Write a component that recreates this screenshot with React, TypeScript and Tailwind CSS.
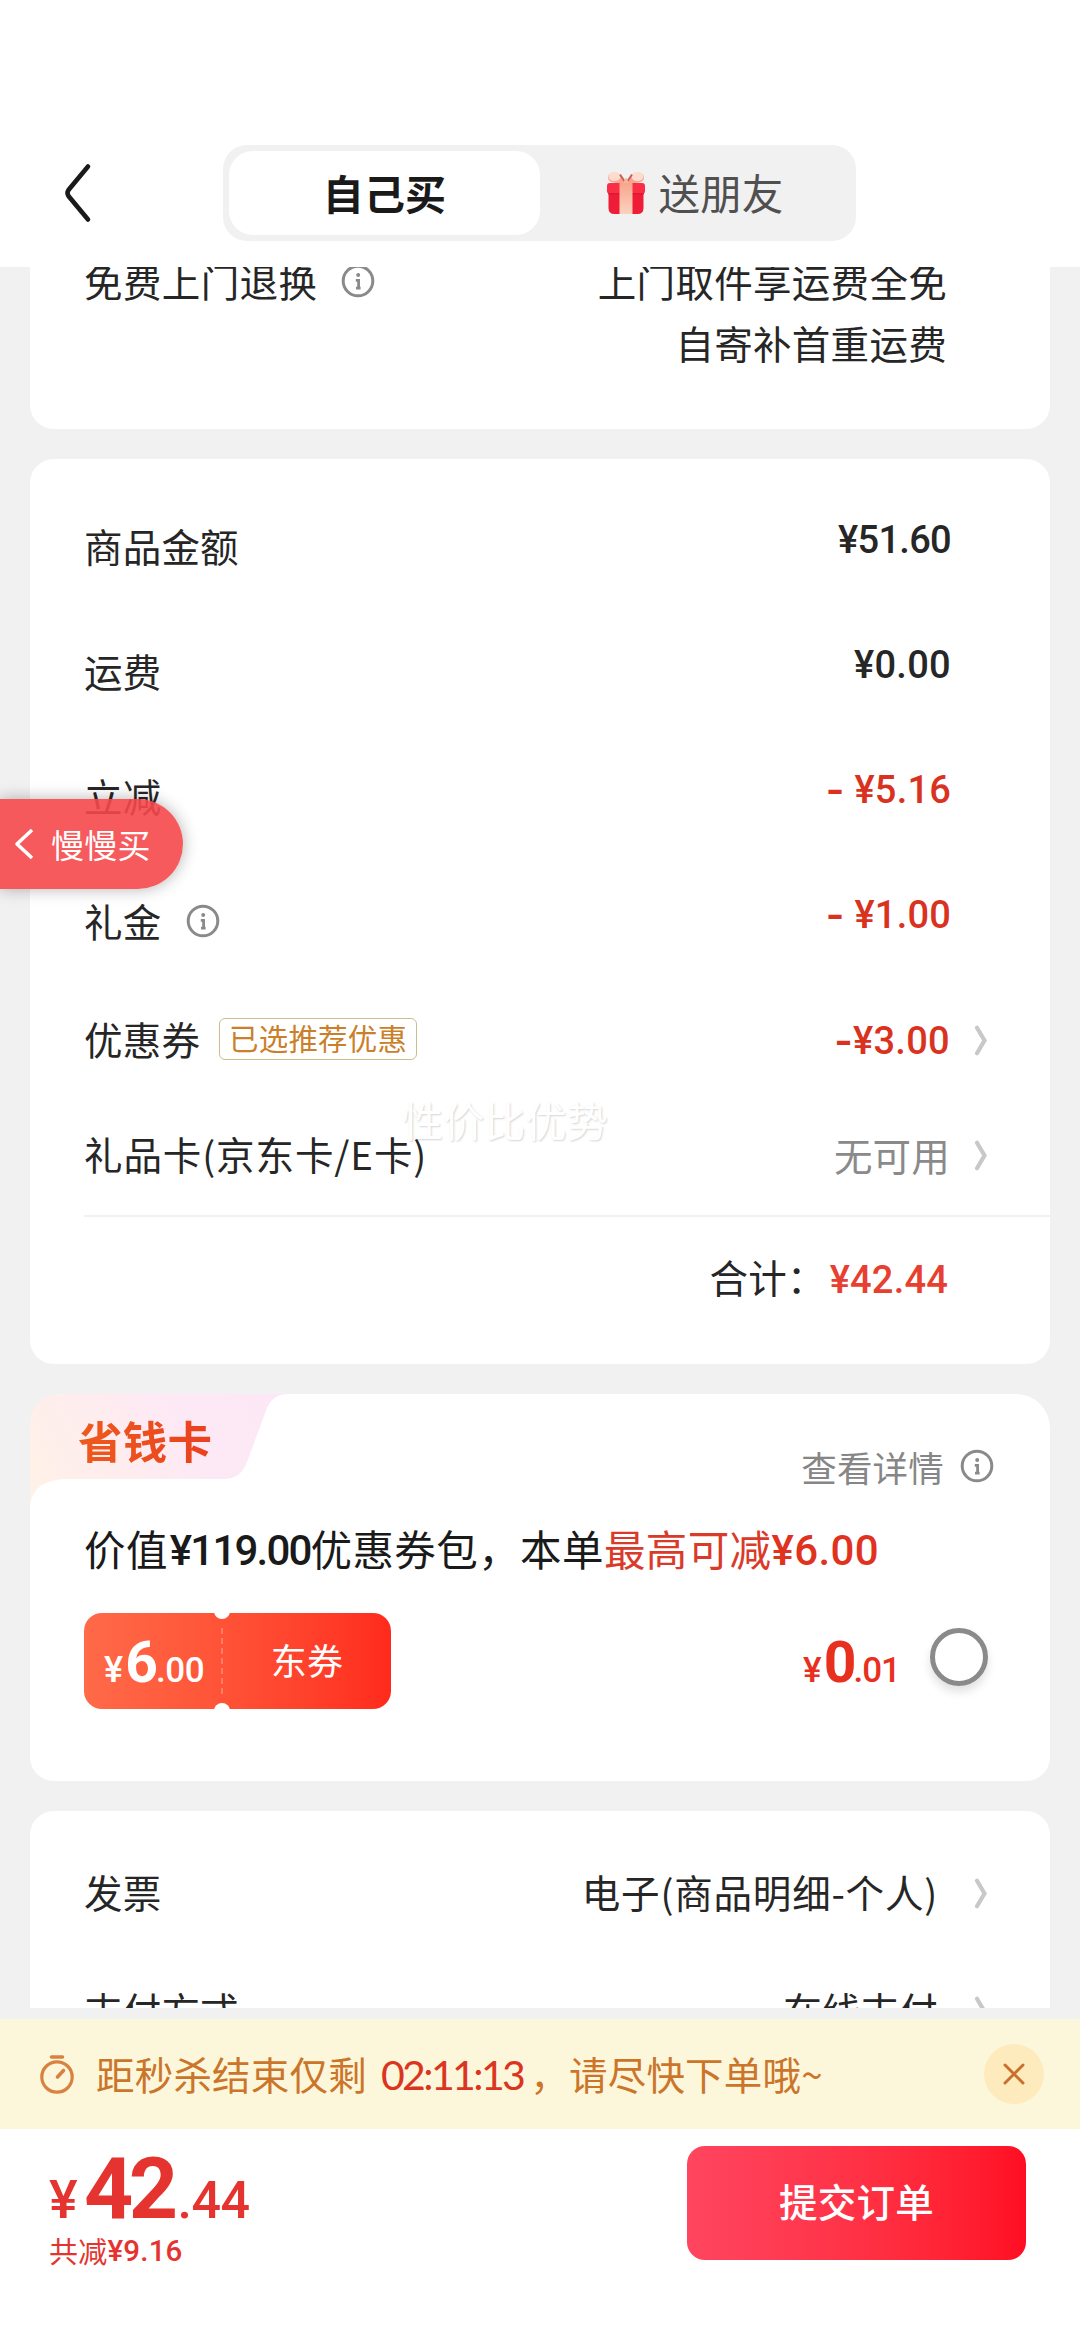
import clsx from "clsx";
import type { ReactNode } from "react";

interface InfoIconProps {
  className?: string;
}

interface RowProps {
  label: string;
  className?: string;
  labelClass?: string;
  extra?: ReactNode;
  children: ReactNode;
}

interface AmountProps {
  value: string;
  minus?: boolean;
  className?: string;
}

const InfoIcon = ({ className }: InfoIconProps) => (
  <svg
    viewBox="0 0 34 34"
    fill="none"
    className={clsx("h-[34px] w-[34px] shrink-0", className)}
  >
    <circle cx="17" cy="17" r="14.8" stroke="#8a8a8a" strokeWidth="3" />
    <circle cx="17.2" cy="11" r="2" fill="#8a8a8a" />
    <path
      d="M14.8 16.4h2.800v7.400M15 24.200h4.600"
      stroke="#8a8a8a"
      strokeWidth="2.800"
    />
  </svg>
);

const RowArrow = () => (
  <svg viewBox="0 0 14 32" fill="none" className="h-8 w-3.5 shrink-0">
    <path
      d="M3 2.800L10.500 15.500L3 28.200"
      stroke="#c8c8c8"
      strokeWidth="4.200"
      strokeLinecap="round"
    />
  </svg>
);

const GiftIcon = () => (
  <svg viewBox="0 0 40 44" className="h-11 w-10">
    <defs>
      <linearGradient id="ribbon" x1="0" y1="0" x2="0" y2="1">
        <stop offset="0" stopColor="#f8a58d" />
        <stop offset="1" stopColor="#fbd3bf" />
      </linearGradient>
    </defs>
    <path d="M19 12C13 12 2 13 2 6.500C2 0 14 -1 19 12Z" fill="#f7a592" />
    <path d="M21 12C27 12 38 13 38 6.500C38 0 26 -1 21 12Z" fill="#f7a592" />
    <ellipse cx="8.500" cy="5.500" rx="6" ry="4.500" fill="#fddccf" />
    <ellipse cx="31.500" cy="5.500" rx="6" ry="4.500" fill="#fddccf" />
    <path d="M19 11L14 3.500M21 11L26 3.500" stroke="#c8604f" strokeWidth="2" />
    <path d="M17 12L19.500 7H20.500L23 12Z" fill="#f8b39c" />
    <path d="M2.500 19H37.500V37Q37.500 43 31.500 43H8.500Q2.500 43 2.500 37Z" fill="#ef1c37" />
    <rect x="1" y="12" width="38" height="11" rx="3" fill="#fa2f45" />
    <path d="M2 22.800H38" stroke="#cc1230" strokeWidth="1" />
    <rect x="13.500" y="12" width="13" height="31" fill="url(#ribbon)" />
  </svg>
);

const Row = ({ label, className, labelClass, extra, children }: RowProps) => (
  <div className={clsx("flex items-center justify-between", className)}>
    <div className="flex items-center">
      <span className={clsx("pb-[5px]", labelClass)}>{label}</span>
      {extra}
    </div>
    {children}
  </div>
);

const Amount = ({ value, minus, className }: AmountProps) => (
  <span
    className={clsx(
      "flex items-center font-['Roboto'] text-[38px] font-medium",
      minus && "text-[#d9321f]",
      className
    )}
  >
    {value}
  </span>
);

const Minus = ({ className }: { className?: string }) => (
  <span
    className={clsx(
      "font-['Inter'] text-[40px] font-semibold text-[#d9321f]",
      className
    )}
  >
    -
  </span>
);

const Header = () => (
  <header className="flex h-[267px] shrink-0 items-start bg-white pt-[145px]">
    <div className="flex h-24 w-[223px] items-center pl-[62px]">
      <svg viewBox="0 0 30 60" fill="none" className="h-[60px] w-[30px]">
        <path
          d="M26 3.500L6.500 27Q4.500 30 6.500 33L26 56.500"
          stroke="#1a1a1a"
          strokeWidth="4.600"
          strokeLinecap="round"
        />
      </svg>
    </div>
    <div className="flex h-24 w-[633px] items-center rounded-3xl bg-[#f1f1f1] p-1.5">
      <div className="flex h-[84px] w-[311px] items-center justify-center rounded-3xl bg-white pb-0.5 text-[41px] font-bold text-[#1a1a1a]">
        自己买
      </div>
      <div className="flex flex-1 items-center justify-center gap-3 text-[41.500px] text-[#505050]">
        <GiftIcon />
        <span>送朋友</span>
      </div>
    </div>
  </header>
);

const PriceCard = () => (
  <section className="mt-[30px] h-[905px] rounded-3xl bg-white pt-[26px] pl-[54px]">
    <Row label="商品金额" className="h-[125px] pr-[99px]">
      <Amount value="¥51.60" className="pb-[15px] tracking-[-0.700px]" />
    </Row>
    <Row label="运费" className="h-[125px] pr-[99px]">
      <Amount value="¥0.00" className="pb-[15px] tracking-[0.300px]" />
    </Row>
    <Row label="立减" className="h-[125px] pr-[99px]">
      <div className="flex items-center gap-2.5 pb-[15px]">
        <Minus />
        <Amount value="¥5.16" minus />
      </div>
    </Row>
    <Row
      label="礼金"
      className="h-[125px] pr-[99px]"
      extra={<InfoIcon className="mb-1 ml-[25px]" />}
    >
      <div className="flex items-center gap-2.5 pb-[15px]">
        <Minus />
        <Amount value="¥1.00" minus />
      </div>
    </Row>
    <Row
      label="优惠券"
      className="h-[112px] pr-[62px]"
      extra={
        <span className="mb-1 ml-[19px] flex h-[42px] w-[198px] items-center justify-center rounded-md border border-[#cdbd8c] pb-0.5 text-[29.500px] text-[#cb7f2b]">
          已选推荐优惠
        </span>
      }
    >
      <div className="flex items-center">
        <Minus />
        <Amount value="¥3.00" minus className="tracking-[0.300px]" />
        <span className="w-6" />
        <RowArrow />
      </div>
    </Row>
    <Row
      label="礼品卡(京东卡/E卡)"
      className="h-[120px] border-b-2 border-[#f1f1f1] pr-[62px]"
      labelClass="tracking-[0.900px]"
    >
      <div className="flex items-center gap-6 text-[#8a8a8a]">
        <span className="pb-[3px]">无可用</span>
        <RowArrow />
      </div>
    </Row>
    <div className="flex h-[124px] items-center justify-end pr-[102px]">
      <span className="mr-1 pb-[5px]">合计：</span>
      <span className="pt-0.5 font-['Roboto'] text-[38px] font-medium text-[#e84030]">
        ¥42.44
      </span>
    </div>
  </section>
);

const SavingCard = () => (
  <section className="relative mt-[30px] h-[387px] rounded-3xl rounded-t-[34px] bg-white">
    <svg
      viewBox="0 0 258 110"
      className="absolute top-0 left-0 h-[110px] w-[258px]"
    >
      <defs>
        <linearGradient id="tab" x1="0" y1="0.500" x2="1" y2="0.300">
          <stop offset="0" stopColor="#fff0e8" />
          <stop offset="0.600" stopColor="#fde9f5" />
          <stop offset="1" stopColor="#fde7f6" />
        </linearGradient>
      </defs>
      <path
        d="M0 34Q0 0 34 0H258Q243 0 237 14L217 68Q211 85 194 85H36Q4 86 0 110Z"
        fill="url(#tab)"
      />
    </svg>
    <div className="relative flex h-[119px] justify-between pr-[56px] pl-[48px]">
      <h2 className="bg-gradient-to-r from-[#ee5a1c] to-[#ea401f] bg-clip-text pt-[13px] text-[44.500px] leading-[66px] font-bold text-transparent">
        省钱卡
      </h2>
      <div className="flex h-[148px] items-center gap-4 text-[35.500px] text-[#868686]">
        <span className="pb-[3px]">查看详情</span>
        <InfoIcon className="mb-1" />
      </div>
    </div>
    <p className="flex h-[76px] items-center pb-[5px] pl-[54px] text-[41.500px] tracking-[0.400px] whitespace-pre text-[#1a1a1a]">
      价值
      <b className="mt-[5px] ml-0.5 font-['Roboto'] text-[42px] font-medium tracking-[-1.800px]">
        ¥119.00
      </b>
      优惠券包，本单
      <span className="text-[#da3a29]">最高可减</span>
      <b className="mt-[5px] font-['Roboto'] text-[42px] font-medium text-[#e0321f]">
        ¥6.00
      </b>
    </p>
    <div className="mt-6 flex h-24 items-center pr-[62px] pl-[54px]">
      <div className="relative flex h-24 w-[307px] items-center overflow-hidden rounded-[18px] bg-gradient-to-r from-[#ff6a48] to-[#ff2a1c] text-white">
        <div className="flex h-full w-[137px] items-baseline pt-[21px] pl-5 font-['Roboto'] font-medium">
          <span className="text-[36px]">¥</span>
          <span className="ml-0.5 text-[57px] font-bold tracking-[-2px]">6</span>
          <span className="text-[35px] tracking-[-0.500px]">.00</span>
        </div>
        <div className="h-[66px] border-l-2 border-dashed border-white/25" />
        <div className="flex-1 pb-1 text-center text-[36px]">东券</div>
        <div className="absolute -top-2.5 left-[130px] h-4 w-4 rounded-full bg-white" />
        <div className="absolute -bottom-2.5 left-[130px] h-4 w-4 rounded-full bg-white" />
      </div>
      <div className="ml-auto flex h-full items-baseline pt-[21px] font-['Roboto'] font-medium text-[#e8301f]">
        <span className="text-[35px]">¥</span>
        <span className="ml-0.5 text-[57px] font-bold tracking-[-3px]">0</span>
        <span className="text-[35px] tracking-[-1px]">.01</span>
      </div>
      <div className="mb-2 ml-[30px] h-[58px] w-[58px] rounded-full border-[5px] border-[#8a8a8a] shadow-[0_6px_10px_rgba(0,0,0,0.12)]" />
    </div>
  </section>
);

const PaymentCard = () => (
  <section className="mt-[30px] h-[260px] rounded-3xl bg-white pt-[24px] pl-[54px]">
    <Row label="发票" className="h-[118px] pr-[62px]">
      <div className="flex items-center gap-9">
        <span className="pb-[5px] tracking-[0.800px]">电子(商品明细-个人)</span>
        <RowArrow />
      </div>
    </Row>
    <Row label="支付方式" className="h-[118px] pr-[62px]">
      <div className="flex items-center gap-9">
        <span className="pb-[5px]">在线支付</span>
        <RowArrow />
      </div>
    </Row>
  </section>
);

const CountdownBar = () => (
  <div className="mt-[11px] flex h-[110px] shrink-0 items-center bg-[#fcf7da] pr-9 pl-[39px] text-[38.500px] text-[#cb752b]">
    <svg viewBox="0 0 36 40" fill="none" className="h-10 w-9">
      <circle cx="18" cy="23" r="15.200" stroke="#d9823f" strokeWidth="3.200" />
      <path
        d="M12.500 3H23.500M18.500 23L24.500 16.500"
        stroke="#d9823f"
        strokeWidth="3.600"
        strokeLinecap="round"
      />
    </svg>
    <span className="ml-[21px] pb-0.5">距秒杀结束仅剩</span>
    <span className="ml-3.5 font-['Lato'] text-[41px] tracking-[-2.600px] text-[#db3421]">
      02:11:13
    </span>
    <span className="ml-[7px] pb-0.5">，请尽快下单哦~</span>
    <div className="ml-auto flex h-[60px] w-[60px] items-center justify-center rounded-full bg-[#fdebbd]">
      <svg viewBox="0 0 24 24" className="h-6 w-6">
        <path
          d="M3 3L21 21M21 3L3 21"
          stroke="#c9702c"
          strokeWidth="3"
          strokeLinecap="round"
        />
      </svg>
    </div>
  </div>
);

const SubmitBar = () => (
  <footer className="flex flex-1 items-start justify-between bg-white pr-[54px] pl-[49px]">
    <div className="pt-3.5 text-[#e5342f]">
      <div className="flex h-[92px] items-baseline font-['Roboto'] leading-[92px] font-medium">
        <span className="text-[54px]">¥</span>
        <span className="ml-1.5 text-[86px] font-bold tracking-[-4.500px]">42</span>
        <span className="ml-1 text-[52px] tracking-[-0.500px]">.44</span>
      </div>
      <div className="flex items-center text-[29px] leading-[30px]">
        <span className="pb-0.5">共减</span>
        <b className="font-['Roboto'] text-[29.500px] font-medium">¥9.16</b>
      </div>
    </div>
    <button className="mt-[17px] h-[114px] w-[339px] rounded-[18px] bg-gradient-to-r from-[#ff455f] to-[#ff0d22] pb-1.5 text-[38.500px] font-medium text-white">
      提交订单
    </button>
  </footer>
);

const App = () => {
  return (
    <div className="relative flex h-[2344px] w-[1080px] flex-col overflow-hidden bg-[#f1f1f1] font-['Noto_Sans_CJK_SC',sans-serif] text-[38.500px] leading-none tracking-[0.200px] text-[#262626]">
      <Header />
      <main className="h-[1741px] shrink-0 overflow-hidden px-[30px]">
        <section className="-mt-[18px] flex h-[180px] justify-between rounded-b-3xl bg-white pr-[103px] pl-[54px] leading-[62px]">
          <div className="flex h-[62px] items-center tracking-[0.400px]">
            免费上门退换
            <InfoIcon className="mt-0.5 ml-6" />
          </div>
          <p className="text-right tracking-[0.300px]">
            上门取件享运费全免
            <br />
            自寄补首重运费
          </p>
        </section>
        <PriceCard />
        <SavingCard />
        <PaymentCard />
      </main>
      <CountdownBar />
      <SubmitBar />

      {/* floating return tab */}
      <div className="absolute top-[799px] left-0 flex h-[90px] w-[183px] items-center rounded-r-full bg-[#f5484b]/90 pl-[14px] text-[33px] text-white shadow-[0_0_16px_rgba(0,0,0,0.3)]">
        <svg viewBox="0 0 20 32" fill="none" className="mr-[17px] h-8 w-5">
          <path
            d="M18 2L3 16L18 30"
            stroke="#fff"
            strokeWidth="3.600"
            strokeLinejoin="round"
          />
        </svg>
        慢慢买
      </div>
      <div className="absolute top-[1099px] left-[402px] text-[41px] text-white [text-shadow:1px_1px_2px_rgba(0,0,0,0.17)]">
        性价比优势
      </div>
    </div>
  );
};

export default App;
